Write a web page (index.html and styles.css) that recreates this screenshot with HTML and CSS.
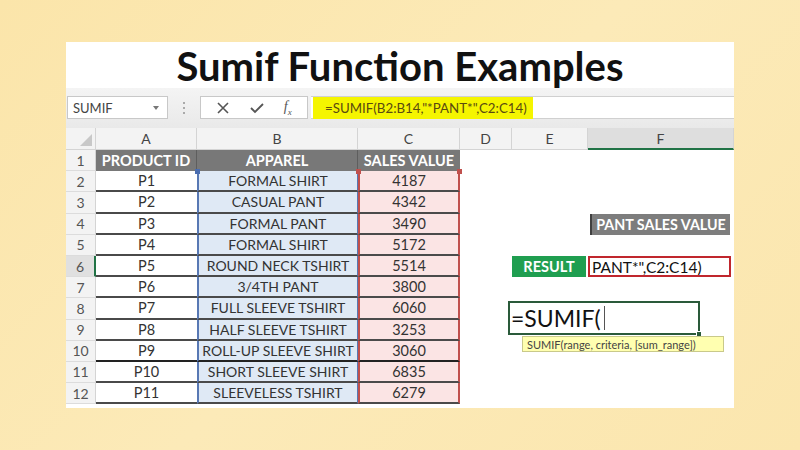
FILE: index.html
```html
<!DOCTYPE html>
<html>
<head>
<meta charset="utf-8">
<link rel="stylesheet" href="styles.css">
</head>
<body>
<div class="panel">
  <h1 class="title">Sumif Function Examples</h1>
  <div class="fbar">
    <div class="namebox"><span>SUMIF</span><span class="caret"></span></div>
    <div class="grip"><i></i><i></i><i></i></div>
    <div class="fxbox">
      <svg width="14" height="14" viewBox="0 0 14 14"><path d="M2 2 L12 12 M12 2 L2 12" stroke="#555" stroke-width="1.6" fill="none"/></svg>
      <svg width="16" height="14" viewBox="0 0 16 14"><path d="M2 7 L6 11 L14 3" stroke="#555" stroke-width="1.8" fill="none"/></svg>
      <span class="fx">f<sub>x</sub></span>
    </div>
    <div class="finput"><span class="fhl">=SUMIF(B2:B14,"*PANT*",C2:C14)</span></div>
  </div>
  <div class="sheet">
    <div class="corner"><span class="tri"></span></div><div class="ch">A</div><div class="ch">B</div><div class="ch">C</div><div class="ch">D</div><div class="ch">E</div><div class="ch chf">F</div>

    <div class="rh">1</div><div class="hd hda">PRODUCT ID</div><div class="hd hdb">APPAREL</div><div class="hd hdc">SALES VALUE</div><div class="e"></div><div class="e"></div><div class="e"></div>

    <div class="rh">2</div><div class="ca">P1</div><div class="cb">FORMAL SHIRT</div><div class="cc">4187</div><div class="e"></div><div class="e"></div><div class="e"></div>
    <div class="rh">3</div><div class="ca">P2</div><div class="cb">CASUAL PANT</div><div class="cc">4342</div><div class="e"></div><div class="e"></div><div class="e"></div>
    <div class="rh">4</div><div class="ca">P3</div><div class="cb">FORMAL PANT</div><div class="cc">3490</div><div class="e"></div><div class="e"></div><div class="e pant">PANT SALES VALUE</div>
    <div class="rh">5</div><div class="ca">P4</div><div class="cb">FORMAL SHIRT</div><div class="cc">5172</div><div class="e"></div><div class="e"></div><div class="e"></div>
    <div class="rh rha">6</div><div class="ca">P5</div><div class="cb">ROUND NECK TSHIRT</div><div class="cc">5514</div><div class="e"></div><div class="e result">RESULT</div><div class="e res">PANT*",C2:C14)</div>
    <div class="rh">7</div><div class="ca">P6</div><div class="cb">3/4TH PANT</div><div class="cc">3800</div><div class="e"></div><div class="e"></div><div class="e"></div>
    <div class="rh">8</div><div class="ca">P7</div><div class="cb">FULL SLEEVE TSHIRT</div><div class="cc">6060</div><div class="e"></div><div class="e"></div><div class="e"></div>
    <div class="rh">9</div><div class="ca">P8</div><div class="cb">HALF SLEEVE TSHIRT</div><div class="cc">3253</div><div class="e"></div><div class="e"></div><div class="e"></div>
    <div class="rh">10</div><div class="ca thick">P9</div><div class="cb thick">ROLL-UP SLEEVE SHIRT</div><div class="cc thick">3060</div><div class="e"></div><div class="e"></div><div class="e"></div>
    <div class="rh">11</div><div class="ca">P10</div><div class="cb">SHORT SLEEVE SHIRT</div><div class="cc">6835</div><div class="e"></div><div class="e"></div><div class="e"></div>
    <div class="rh">12</div><div class="ca">P11</div><div class="cb">SLEEVELESS TSHIRT</div><div class="cc">6279</div><div class="e"></div><div class="e"></div><div class="e"></div>
  </div>
  <span class="sq sq-b"></span><span class="sq sq-c1"></span><span class="sq sq-c2"></span>
  <div class="editor">=SUMIF(<span class="cursor"></span><span class="handle"></span></div>
  <div class="tip">SUMIF(range, criteria, [sum_range])</div>
</div>
</body>
</html>
```
FILE: styles.css
```css
* { box-sizing: border-box; }
html, body { margin: 0; padding: 0; }
body {
  width: 800px;
  height: 450px;
  overflow: hidden;
  background: linear-gradient(135deg, #fbe5aa 0%, #fceab8 50%, #fbe6ae 100%);
  font-family: "Lato", "Open Sans", sans-serif;
  padding: 42px 0 0 66px;
}
.panel {
  position: relative;
  width: 668px;
  height: 366px;
  background: #fff;
}
.title {
  margin: 0;
  height: 46px;
  display: flex;
  align-items: center;
  justify-content: center;
  font-size: 40px;
  font-weight: 700;
  color: #111;
  padding-left: 0;
  padding-top: 1px;
}
.fbar {
  height: 40px;
  background: linear-gradient(#f4f4f4, #e9e9e9);
  display: flex;
  align-items: flex-start;
  padding-top: 8px;
  padding-left: 1px;
}
.namebox {
  width: 101px;
  height: 23px;
  background: #fff;
  border: 1px solid #c8c8c8;
  display: flex;
  align-items: center;
  justify-content: space-between;
  padding: 0 8px 0 5px;
  font-size: 13px;
  color: #444;
}
.caret {
  width: 0; height: 0;
  border-left: 3px solid transparent;
  border-right: 3px solid transparent;
  border-top: 4px solid #777;
}
.grip {
  width: 32px;
  height: 23px;
  display: flex;
  flex-direction: column;
  align-items: center;
  justify-content: center;
  gap: 3px;
}
.grip i { width: 2px; height: 2px; background: #aaa; display: block; }
.fxbox {
  width: 108px;
  height: 23px;
  background: #fff;
  border: 1px solid #c8c8c8;
  display: flex;
  align-items: center;
  justify-content: space-around;
  padding: 0 6px;
}
.fx {
  font-family: "Liberation Serif", serif;
  font-style: italic;
  font-size: 14px;
  color: #555;
}
.fx sub { font-size: 9px; }
.finput {
  flex: 1;
  height: 23px;
  background: #fff;
  border-top: 1px solid #d0d0d0;
  border-bottom: 1px solid #d0d0d0;
  margin-left: 3px;
  padding-left: 2px;
}
.fhl {
  display: inline-flex;
  align-items: center;
  height: 22px;
  width: 220px;
  background: #f5f500;
  padding-left: 12px;
  font-size: 13.3px;
  color: #5a4a10;
}
.sheet {
  display: grid;
  grid-template-columns: 30px 101px 161px 102px 52px 76px 146px;
  grid-template-rows: 22px repeat(12, 21.2px);
  font-size: 14px;
}
.sheet > div {
  display: flex;
  align-items: center;
  justify-content: center;
  overflow: hidden;
  white-space: nowrap;
}
.corner {
  background: #f3f3f3;
  border-right: 1px solid #d4d4d4;
  border-bottom: 1px solid #d4d4d4;
  position: relative;
}
.tri {
  position: absolute;
  right: 3px; bottom: 3px;
  width: 0; height: 0;
  border-left: 12px solid transparent;
  border-bottom: 12px solid #c8c8c8;
}
.ch {
  background: #f3f3f3;
  border-right: 1px solid #d4d4d4;
  border-bottom: 1px solid #d4d4d4;
  color: #444;
  font-size: 14px;
}
.chf {
  background: #dedede;
  border-bottom: 2px solid #217346;
}
.rh {
  background: #f3f3f3;
  border-right: 1px solid #d4d4d4;
  border-bottom: 1px solid #dcdcdc;
  color: #555;
  font-size: 14px;
}
.rha {
  background: #e0e0e0;
  border-right: 2px solid #217346;
}
.hd {
  background: #787878;
  color: #fff;
  font-weight: 700;
  font-size: 14.5px;
  border-right: 1px solid #5e5e5e;
}
.hdc { border-right: none; }
.ca, .cb, .cc {
  color: #333;
  font-size: 14.5px;
  border-bottom: 2px solid #4a4a4a;
}
.ca { background: #fff; }
.cb {
  background: #dfe9f5;
  border-left: 2px solid #5878b4;
  border-right: 1px solid #5878b4;
  font-size: 14px;
}
.cc {
  background: #fbe4e4;
  border-left: 2px solid #c0504d;
  border-right: 2px solid #c0504d;
}
.sheet > .thick { border-bottom: 2.5px solid #222; }
.e { background: #fff; }
.pant {
  background: #7d7d7d;
  color: #fff;
  font-weight: 700;
  font-size: 14.3px;
  border-left: 2px solid #404040;
  margin: 0 4px 0 2px;
}
.result {
  background: #1f9e50;
  color: #fff;
  font-weight: 700;
  font-size: 14.5px;
  margin-right: 2px;
}
.sheet > .res {
  justify-content: flex-start;
  border: 2px solid #c0262d;
  padding-left: 2px;
  font-size: 15.5px;
  color: #111;
  margin-right: 3px;
}
.sq {
  position: absolute;
  top: 127px;
  width: 5px;
  height: 5px;
}
.sq-b { left: 129px; background: #4a6db0; }
.sq-c1 { left: 290px; background: #c0504d; }
.sq-c2 { left: 391px; background: #c0504d; }
.editor {
  position: absolute;
  left: 442px;
  top: 259px;
  width: 192px;
  height: 34px;
  border: 2px solid #2a5a3a;
  background: #fff;
  font-size: 23px;
  color: #111;
  display: flex;
  align-items: center;
  padding-left: 1px;
}
.cursor {
  width: 1px;
  height: 24px;
  background: #555;
  margin-left: 3px;
}
.handle {
  position: absolute;
  right: -4px;
  bottom: -4px;
  width: 6px;
  height: 6px;
  background: #2a5a3a;
  border: 1px solid #fff;
}
.tip {
  position: absolute;
  left: 456px;
  top: 294px;
  width: 202px;
  height: 16px;
  background: #ffffb0;
  border: 1px solid #c9c98a;
  font-size: 11px;
  color: #444;
  display: flex;
  align-items: center;
  padding-left: 4px;
}
```
